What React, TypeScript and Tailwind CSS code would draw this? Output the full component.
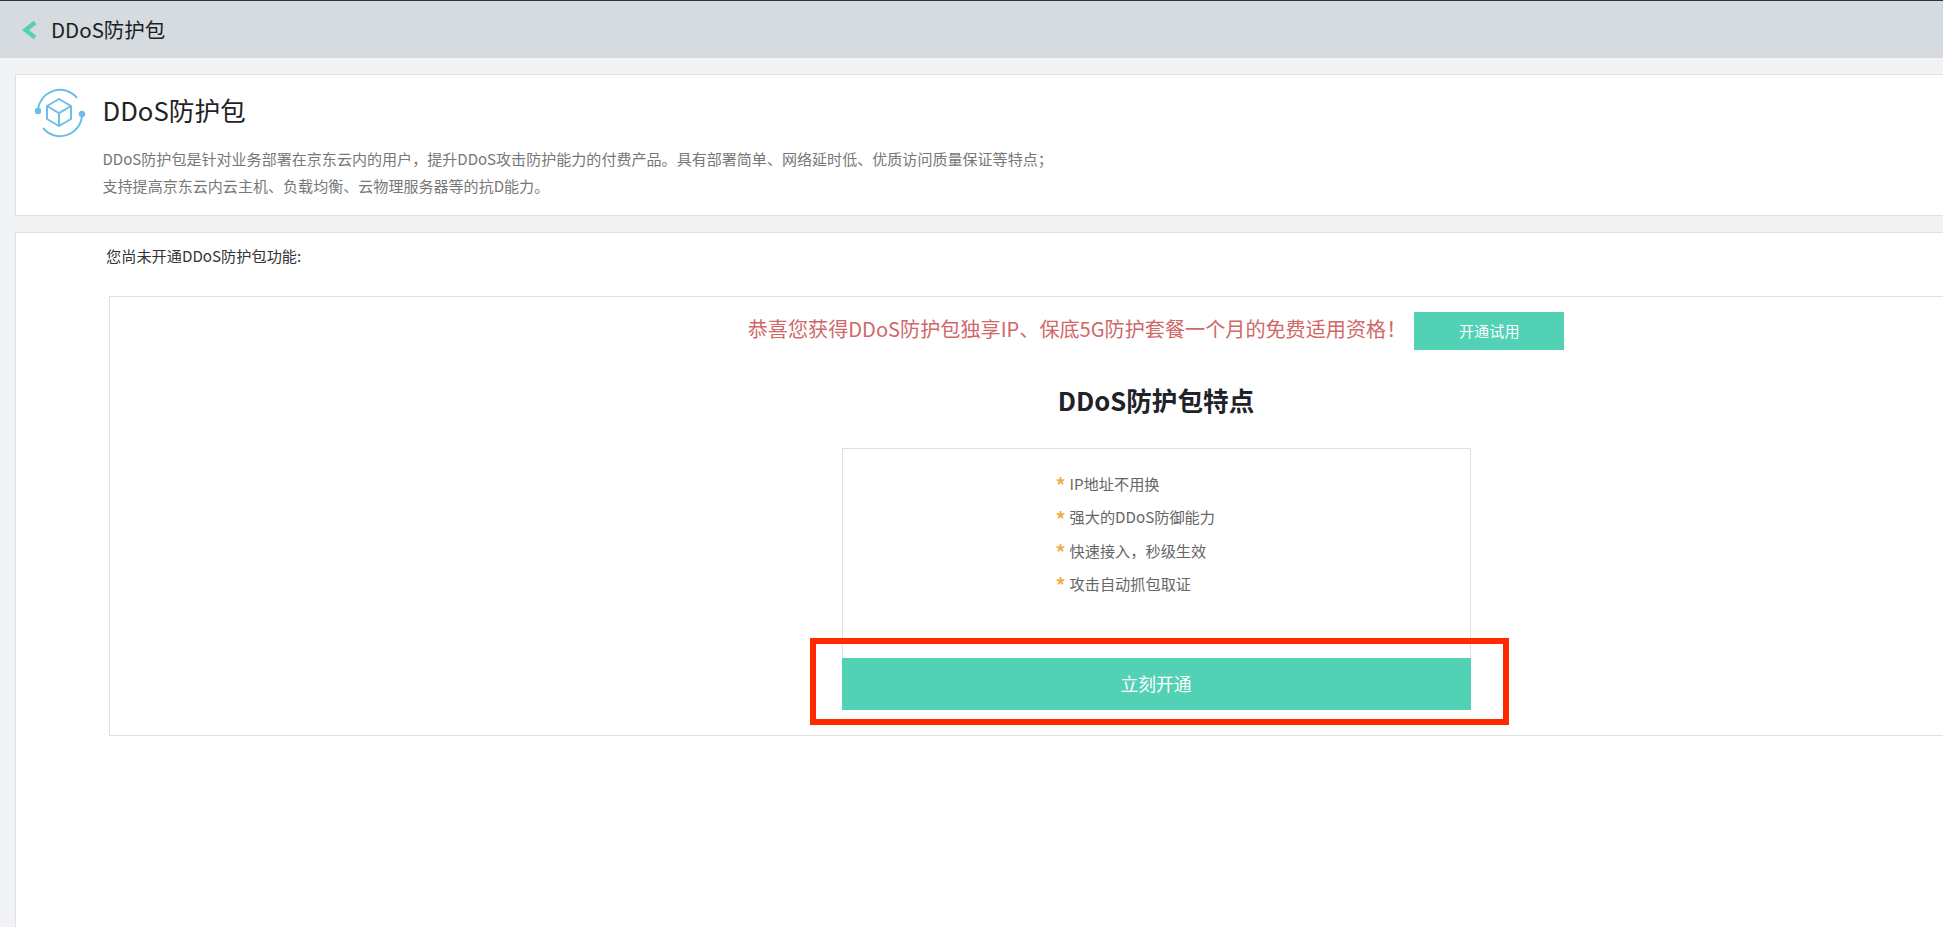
const features = ["IP地址不用换", "强大的DDoS防御能力", "快速接入，秒级生效", "攻击自动抓包取证"];

function CubeIcon() {
  return (
    <svg width="52" height="50" viewBox="0 0 52 50" fill="none" stroke="#6cbfe9" strokeWidth="2" className="shrink-0">
      <path d="M4 22A22 22 0 0 1 43 10" />
      <path d="M48 28A22 22 0 0 1 9 40" />
      <circle cx="4" cy="23" r="2.2" fill="#6cbfe9" />
      <circle cx="48" cy="26" r="2.2" fill="#6cbfe9" />
      <path d="M25 11L37 18V31L25 38L13 31V18Z" strokeLinejoin="round" />
      <path d="M13 18L25 25L37 18M25 25V38" />
    </svg>
  );
}

export default function App() {
  return (
    <div className="w-[1943px] h-[927px] overflow-hidden bg-[#f2f3f5] border-t border-[#30353b] font-['Noto_Sans_CJK_SC','Noto_Sans',sans-serif]">
      <div className="h-[57px] bg-[#d5dbdf] flex items-center pl-[22px] gap-[14px] min-w-full">
        <svg width="15" height="18" viewBox="0 0 15 18" fill="none" stroke="#52d1b4" strokeWidth="4.5">
          <path d="M13 1.5L3.5 9L13 16.5" />
        </svg>
        <span className="text-[20.5px] text-[#1b1f24] leading-none">DDoS防护包</span>
      </div>

      <div className="ml-[15px] mt-[16px] w-[2300px] h-[142px] bg-white border border-[#dfe1e5] pl-[18px] pt-[13px] flex gap-[16.5px]">
        <CubeIcon />
        <div className="pt-[5px]">
          <div className="text-[25.7px] leading-[34px] text-[#1f2329]">DDoS防护包</div>
          <div className="mt-[18px] text-[15.05px] leading-[27px] text-[#777]">
            <p>DDoS防护包是针对业务部署在京东云内的用户，提升DDoS攻击防护能力的付费产品。具有部署简单、网络延时低、优质访问质量保证等特点；</p>
            <p>支持提高京东云内云主机、负载均衡、云物理服务器等的抗D能力。</p>
          </div>
        </div>
      </div>

      <div className="ml-[15px] mt-[16px] w-[2300px] h-[700px] bg-white border border-[#dfe1e5] pt-[12px] pl-[90px]">
        <div className="text-[15.2px] leading-[20px] text-[#333]">您尚未开通DDoS防护包功能:</div>

        <div className="ml-[3px] mt-[31px] w-[2094px] h-[440px] border border-[#e0e0e0] flex flex-col items-center">
          <div className="mt-[15px] h-[38px] flex items-center gap-[8px]">
            <span className="text-[20.12px] leading-[34px] pb-[5px] text-[#cf6868]">恭喜您获得DDoS防护包独享IP、保底5G防护套餐一个月的免费适用资格！</span>
            <button className="w-[150px] h-[38px] pb-[2px] bg-[#52d1b4] text-white text-[15.2px]">开通试用</button>
          </div>
          <h2 className="mt-[32px] text-[25.6px] leading-[36px] font-bold text-[#1f2329]">DDoS防护包特点</h2>
          <div className="relative mt-[30px] w-[629px] h-[262px] border border-[#dfdfdf] border-b-0 flex flex-col">
            <ul className="flex-1 pl-[213px] pt-[17.5px]">
              {features.map((item) => (
                <li key={item} className="h-[33.4px] flex items-center gap-[4px] text-[15.2px] text-[#666]">
                  <span className="w-[10px] pt-[4px] text-[20px] leading-none font-bold text-[#f0ad4e]">*</span>
                  {item}
                </li>
              ))}
            </ul>
            <button className="-mx-px h-[52px] pb-[2px] bg-[#52d1b4] text-white text-[17.8px]">立刻开通</button>
            <div className="absolute -left-[33px] -right-[39px] top-[189px] h-[87px] border-[6px] border-[#ff2a00]" />
          </div>
        </div>
      </div>
    </div>
  );
}
